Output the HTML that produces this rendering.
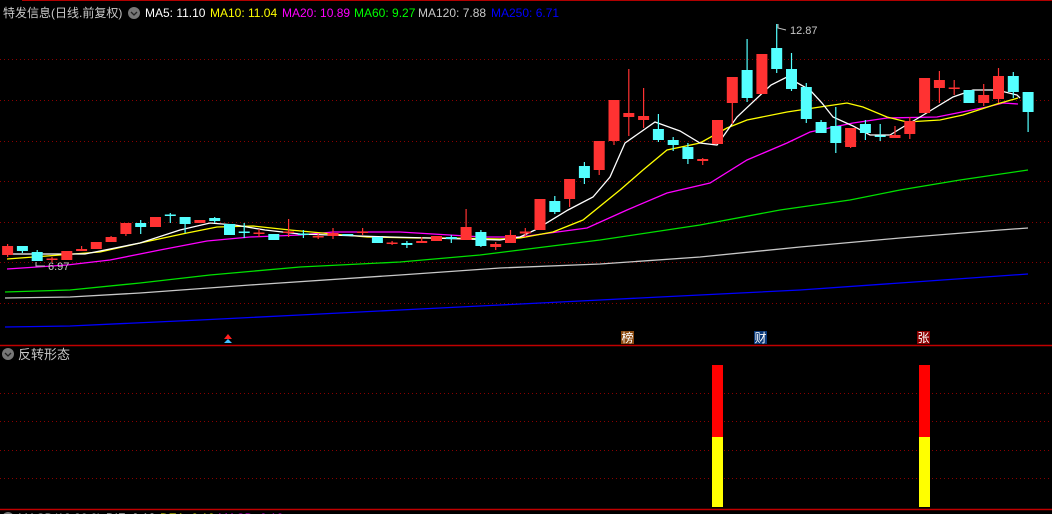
<!DOCTYPE html>
<html><head><meta charset="utf-8"><style>
html,body{margin:0;padding:0;background:#000;width:1052px;height:514px;overflow:hidden}
svg{display:block}
text{font-family:"Liberation Sans","Noto Sans CJK SC",sans-serif}
</style></head><body>
<svg width="1052" height="514" viewBox="0 0 1052 514" xmlns="http://www.w3.org/2000/svg">
<rect width="1052" height="514" fill="#000"/>
<line x1="22" y1="0.5" x2="1052" y2="0.5" stroke="#b00000"/>
<g stroke="#8a0000" stroke-width="1" stroke-dasharray="1,3">
<line x1="0" y1="59.5" x2="1052" y2="59.5"/><line x1="0" y1="100.5" x2="1052" y2="100.5"/>
<line x1="0" y1="141.5" x2="1052" y2="141.5"/><line x1="0" y1="181.5" x2="1052" y2="181.5"/>
<line x1="0" y1="222.5" x2="1052" y2="222.5"/><line x1="0" y1="262.5" x2="1052" y2="262.5"/>
<line x1="0" y1="303.5" x2="1052" y2="303.5"/>
<line x1="0" y1="393.5" x2="1052" y2="393.5"/><line x1="0" y1="421.5" x2="1052" y2="421.5"/>
<line x1="0" y1="450.5" x2="1052" y2="450.5"/><line x1="0" y1="478.5" x2="1052" y2="478.5"/>
</g>
<line x1="0" y1="345.5" x2="1052" y2="345.5" stroke="#c00000" stroke-width="1.5"/>
<line x1="0" y1="509.5" x2="1052" y2="509.5" stroke="#c00000" stroke-width="1.5"/>

<polyline fill="none" stroke="#0000ff" stroke-width="1.3" points="5,327 70,326 200,320 300,315 400,310 500,305 600,300 700,295 800,290 900,283 1028,274"/>
<polyline fill="none" stroke="#c8c8c8" stroke-width="1.3" points="5,298 70,297 140,293 250,285 400,275 500,268 600,264 700,257 800,247 900,238 1000,230 1028,228"/>
<polyline fill="none" stroke="#00e000" stroke-width="1.3" points="5,292 70,290 140,283 210,275 300,267 400,262 480,255 520,250 600,240 700,225 780,210 850,200 900,190 960,180 1028,170"/>
<polyline fill="none" stroke="#ff00ff" stroke-width="1.3" points="7,269 67,265 110,260 160,250 207,241 250,237 300,235 333,232 400,232 433,234 483,237 520,237 587,228 627,210 667,193 710,183 747,160 787,143 810,132 853,123 887,118 937,117 987,107 1003,103 1018,104"/>
<polyline fill="none" stroke="#ffff00" stroke-width="1.3" points="7,259 100,252 140,243 187,233 217,227 253,226 290,230 333,234 367,237 417,238 450,238 500,239 520,238 553,232 583,220 620,190 643,170 667,150 700,143 727,128 747,120 787,112 820,107 847,103 863,107 887,117 907,122 940,120 963,115 997,104 1018,98"/>
<polyline fill="none" stroke="#ffffff" stroke-width="1.3" points="5,254 85,254 140,243 180,230 210,223 235,225 265,230 300,234 390,237 430,238 500,240 520,237 535,230 568,210 593,197 610,177 625,143 655,122 680,131 700,143 717,145 737,117 771,85 787,77 810,90 822,103 833,117 853,126 870,135 890,135 903,127 920,117 953,97 973,90 997,90 1017,95 1020,98"/>

<g stroke="#ff3232" stroke-width="1.2">
<line x1="7.6" y1="244" x2="7.6" y2="257"/><line x1="52" y1="257" x2="52" y2="262"/><line x1="81.6" y1="246" x2="81.6" y2="251"/>
<line x1="111.1" y1="236" x2="111.1" y2="242"/><line x1="125.9" y1="223" x2="125.9" y2="236"/>
<line x1="259" y1="229" x2="259" y2="237"/><line x1="288.6" y1="219" x2="288.6" y2="237"/><line x1="318.2" y1="234" x2="318.2" y2="239"/>
<line x1="333" y1="228" x2="333" y2="239"/><line x1="362.6" y1="228" x2="362.6" y2="235"/><line x1="392.1" y1="241" x2="392.1" y2="245"/>
<line x1="421.7" y1="237" x2="421.7" y2="243"/><line x1="466.1" y1="209" x2="466.1" y2="240"/><line x1="495.7" y1="242" x2="495.7" y2="250"/>
<line x1="510.5" y1="230" x2="510.5" y2="243"/><line x1="525.3" y1="228" x2="525.3" y2="237"/><line x1="569.6" y1="199" x2="569.6" y2="207"/>
<line x1="599.2" y1="141" x2="599.2" y2="175"/><line x1="614" y1="100" x2="614" y2="145"/><line x1="628.8" y1="69" x2="628.8" y2="136"/>
<line x1="643.6" y1="88" x2="643.6" y2="128"/><line x1="702.7" y1="158" x2="702.7" y2="165"/><line x1="732.3" y1="77" x2="732.3" y2="124"/>
<line x1="850.6" y1="128" x2="850.6" y2="148"/><line x1="895" y1="126" x2="895" y2="138"/><line x1="909.8" y1="117" x2="909.8" y2="139"/>
<line x1="939.4" y1="71" x2="939.4" y2="103"/><line x1="954.2" y1="80" x2="954.2" y2="95"/><line x1="983.7" y1="84" x2="983.7" y2="106"/>
<line x1="998.5" y1="68" x2="998.5" y2="103"/>
</g>
<g stroke="#54ffff" stroke-width="1.2">
<line x1="22.4" y1="246" x2="22.4" y2="253"/><line x1="37.2" y1="250" x2="37.2" y2="261"/><line x1="140.7" y1="220" x2="140.7" y2="234"/>
<line x1="170.3" y1="213" x2="170.3" y2="223"/><line x1="185.1" y1="217" x2="185.1" y2="233"/><line x1="214.7" y1="217" x2="214.7" y2="223"/>
<line x1="244.2" y1="223" x2="244.2" y2="238"/><line x1="303.4" y1="230" x2="303.4" y2="238"/><line x1="406.9" y1="241" x2="406.9" y2="248"/>
<line x1="451.3" y1="235" x2="451.3" y2="243"/><line x1="480.9" y1="230" x2="480.9" y2="247"/><line x1="554.8" y1="196" x2="554.8" y2="214"/>
<line x1="584.4" y1="162" x2="584.4" y2="184"/><line x1="658.4" y1="114" x2="658.4" y2="142"/><line x1="673.2" y1="137" x2="673.2" y2="151"/>
<line x1="687.9" y1="143" x2="687.9" y2="164"/><line x1="747.1" y1="39" x2="747.1" y2="102"/><line x1="776.7" y1="24" x2="776.7" y2="73"/>
<line x1="791.5" y1="53" x2="791.5" y2="91"/><line x1="806.3" y1="83" x2="806.3" y2="123"/><line x1="821.1" y1="120" x2="821.1" y2="133"/>
<line x1="835.8" y1="107" x2="835.8" y2="153"/><line x1="865.4" y1="120" x2="865.4" y2="140"/><line x1="880.2" y1="124" x2="880.2" y2="141"/>
<line x1="1013.3" y1="72" x2="1013.3" y2="98"/><line x1="1028.1" y1="92" x2="1028.1" y2="132"/>
</g>
<g fill="#ff3232">
<rect x="2.1" y="246" width="11" height="9"/><rect x="46.5" y="258.5" width="11" height="1.5"/><rect x="61.3" y="251" width="11" height="9"/>
<rect x="76.1" y="249" width="11" height="2"/><rect x="90.8" y="242" width="11" height="7"/><rect x="105.6" y="237" width="11" height="5"/>
<rect x="120.4" y="223" width="11" height="11"/><rect x="150" y="217" width="11" height="10"/><rect x="194.4" y="220" width="11" height="3"/>
<rect x="253.5" y="232.5" width="11" height="1.5"/><rect x="283.1" y="231.5" width="11" height="1.5"/><rect x="312.7" y="236" width="11" height="1.5"/>
<rect x="327.5" y="233" width="11" height="3"/><rect x="357.1" y="231.5" width="11" height="1.5"/><rect x="386.6" y="242.5" width="11" height="1.5"/>
<rect x="416.2" y="241" width="11" height="2"/><rect x="431" y="236" width="11" height="5"/><rect x="460.6" y="227" width="11" height="13"/>
<rect x="490.2" y="244" width="11" height="3"/><rect x="505" y="235" width="11" height="8"/><rect x="519.8" y="231.5" width="11" height="2"/>
<rect x="534.5" y="199" width="11" height="31"/><rect x="564.1" y="179" width="11" height="20"/><rect x="593.7" y="141" width="11" height="29"/>
<rect x="608.5" y="100" width="11" height="41"/><rect x="623.3" y="113" width="11" height="4"/><rect x="638.1" y="116" width="11" height="4"/>
<rect x="697.2" y="159" width="11" height="2"/><rect x="712" y="120" width="11" height="24"/><rect x="726.8" y="77" width="11" height="26"/>
<rect x="756.4" y="54" width="11" height="40"/><rect x="845.1" y="128" width="11" height="19"/><rect x="889.5" y="135" width="11" height="3"/>
<rect x="904.3" y="121" width="11" height="13"/><rect x="919.1" y="78" width="11" height="35"/><rect x="933.9" y="80" width="11" height="8"/>
<rect x="948.7" y="87.5" width="11" height="1.5"/><rect x="978.2" y="95" width="11" height="8"/><rect x="993" y="76" width="11" height="23"/>
</g>
<g fill="#54ffff">
<rect x="16.9" y="246" width="11" height="5"/><rect x="31.7" y="252" width="11" height="9"/><rect x="135.2" y="223" width="11" height="4"/>
<rect x="164.8" y="214.5" width="11" height="1.5"/><rect x="179.6" y="217" width="11" height="7"/><rect x="209.2" y="218" width="11" height="3"/>
<rect x="224" y="224" width="11" height="11"/><rect x="238.7" y="231.5" width="11" height="1.5"/><rect x="268.3" y="234" width="11" height="6"/>
<rect x="297.9" y="233.5" width="11" height="1.5"/><rect x="342.3" y="234" width="11" height="1.5"/><rect x="371.9" y="237" width="11" height="6"/>
<rect x="401.4" y="243" width="11" height="2"/><rect x="445.8" y="237" width="11" height="2"/><rect x="475.4" y="232" width="11" height="14"/>
<rect x="549.3" y="201" width="11" height="11"/><rect x="578.9" y="166" width="11" height="12"/><rect x="652.9" y="129" width="11" height="11"/>
<rect x="667.7" y="140" width="11" height="5"/><rect x="682.4" y="147" width="11" height="12"/><rect x="741.6" y="70" width="11" height="28"/>
<rect x="771.2" y="48" width="11" height="21"/><rect x="786" y="69" width="11" height="20"/><rect x="800.8" y="87" width="11" height="32"/>
<rect x="815.6" y="122" width="11" height="11"/><rect x="830.3" y="126" width="11" height="17"/><rect x="859.9" y="124" width="11" height="9"/>
<rect x="874.7" y="135.5" width="11" height="1.5"/><rect x="963.5" y="90" width="11" height="13"/><rect x="1007.8" y="76" width="11" height="16"/>
<rect x="1022.6" y="92" width="11" height="20"/>
</g>

<polyline points="778,24 778,28 786,30" fill="none" stroke="#c0c0c0"/>
<text x="790" y="34" font-size="11" fill="#c8c8c8">12.87</text>
<polyline points="36,262 36,266 45,266" fill="none" stroke="#c0c0c0"/>
<text x="48" y="270" font-size="11" fill="#c8c8c8">6.97</text>

<text x="3" y="17" font-size="12" fill="#c8c8c8">特发信息(日线.前复权)</text>
<circle cx="134" cy="13" r="6" fill="#777"/><path d="M131,12 L134,15 L137,12" fill="none" stroke="#222" stroke-width="1.3"/>
<text x="145" y="17" font-size="12" fill="#ffffff">MA5: 11.10</text>
<text x="210" y="17" font-size="12" fill="#ffff00">MA10: 11.04</text>
<text x="282" y="17" font-size="12" fill="#ff00ff">MA20: 10.89</text>
<text x="354" y="17" font-size="12" fill="#00ff00">MA60: 9.27</text>
<text x="418" y="17" font-size="12" fill="#c8c8c8">MA120: 7.88</text>
<text x="491" y="17" font-size="12" fill="#0000ff">MA250: 6.71</text>

<path d="M224,339 L228,334 L232,339 Z" fill="#ff2020"/>
<path d="M224,343 L228,339 L232,343 Z" fill="#40c0ff"/>

<rect x="621" y="331" width="13" height="13" fill="#8b4a10"/><text x="621.5" y="342" font-size="12" fill="#fff">榜</text>
<rect x="754" y="331" width="13" height="13" fill="#0a3a7a"/><text x="754.5" y="342" font-size="12" fill="#fff">财</text>
<rect x="917" y="331" width="13" height="13" fill="#8b0000"/><text x="917.5" y="342" font-size="12" fill="#fff">张</text>

<circle cx="8" cy="354" r="6" fill="#777"/><path d="M5,353 L8,356 L11,353" fill="none" stroke="#222" stroke-width="1.3"/>
<text x="18" y="359" font-size="13" fill="#c8c8c8">反转形态</text>
<rect x="712" y="365" width="11" height="72" fill="#ff0000"/><rect x="712" y="437" width="11" height="70" fill="#ffff00"/>
<rect x="919" y="365" width="11" height="72" fill="#ff0000"/><rect x="919" y="437" width="11" height="70" fill="#ffff00"/>

<circle cx="8" cy="518" r="6" fill="#777"/>
<text x="18" y="522" font-size="12" fill="#c8c8c8">MACD(12,26,9)</text>
<text x="106" y="522" font-size="12" fill="#fff">DIF: 0.12</text>
<text x="160" y="522" font-size="12" fill="#ffff00">DEA: 0.10</text>
<text x="218" y="522" font-size="12" fill="#ff00ff">MACD: 0.12</text>
</svg>
</body></html>
